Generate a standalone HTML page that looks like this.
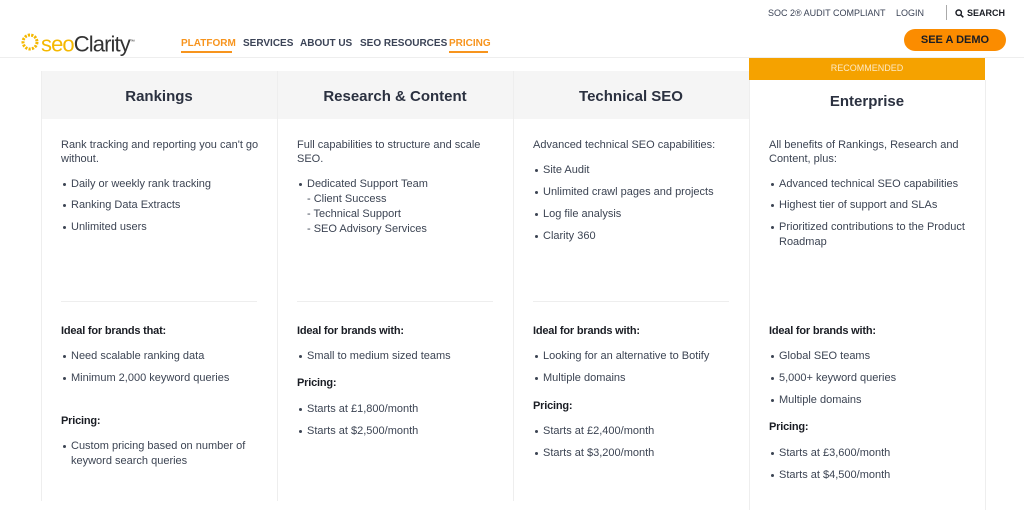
<!DOCTYPE html>
<html><head><meta charset="utf-8"><style>
*{margin:0;padding:0;box-sizing:border-box}
body{width:1024px;height:490px;overflow:hidden;background:#fff;font-family:"Liberation Sans",sans-serif;position:relative;color:#3c4453}
.a{position:absolute;white-space:nowrap}
.t{font-size:11px;line-height:14px;color:#3c4453}
.b{font-size:11px;line-height:14px;color:#1a1d24;font-weight:bold;letter-spacing:-0.2px}
.li{padding-left:10px}
.li:before{content:"";position:absolute;left:2px;top:6px;width:3px;height:3px;border-radius:50%;background:#3c4453}
.h{font-size:15px;font-weight:bold;color:#2b3140;text-align:center;width:236px;line-height:20px}
.nav{font-size:10px;font-weight:bold;color:#3b4356;top:38px}
.col{position:absolute;top:71px;height:430px;width:236px;border-left:1px solid #eee}
.hr{position:absolute;height:1px;background:#eee;width:196px;top:301px}
</style></head><body>
<div class="a" style="left:0;top:57px;width:1024px;height:1px;background:#eee"></div>
<div class="a" style="left:768px;top:8px;font-size:9px;color:#3b4356">SOC 2® AUDIT COMPLIANT</div>
<div class="a" style="left:896px;top:8px;font-size:9px;color:#3b4356">LOGIN</div>
<div class="a" style="left:946px;top:5px;width:1px;height:15px;background:#aaa"></div>
<svg class="a" style="left:955px;top:9px" width="9" height="9" viewBox="0 0 9 9"><circle cx="3.7" cy="3.7" r="2.7" fill="none" stroke="#1a1d24" stroke-width="1.4"/><path d="M5.8 5.8L8.3 8.3" stroke="#1a1d24" stroke-width="1.5"/></svg>
<div class="a" style="left:967px;top:8px;font-size:9px;font-weight:bold;color:#1a1d24">SEARCH</div>
<svg class="a" style="left:20px;top:32px" width="20" height="20" viewBox="0 0 20 20"><circle cx="10" cy="10" r="7" fill="none" stroke="#f5b800" stroke-width="3" stroke-dasharray="2.2 1.2"/></svg>
<div class="a" style="left:41px;top:28px;font-size:22px;letter-spacing:-0.9px;line-height:28px"><span style="color:#f5b800">seo</span><span style="color:#333">Clarity</span><sup style="font-size:5px;color:#333">™</sup></div>
<div class="a nav" style="left:181px;color:#f7941d">PLATFORM</div>
<div class="a" style="left:181px;top:51px;width:51px;height:2px;background:#f7941d"></div>
<div class="a nav" style="left:243px">SERVICES</div>
<div class="a nav" style="left:300px">ABOUT US</div>
<div class="a nav" style="left:360px">SEO RESOURCES</div>
<div class="a nav" style="left:449px;color:#f7941d">PRICING</div>
<div class="a" style="left:449px;top:51px;width:39px;height:2px;background:#f7941d"></div>
<div class="a" style="left:904px;top:29px;width:102px;height:22px;border-radius:11px;background:#fb8c00;color:#1a1d24;font-weight:bold;font-size:11px;text-align:center;line-height:22px">SEE A DEMO</div>
<div class="a" style="left:41px;top:71px;width:708px;height:48px;background:#f5f5f5"></div>
<div class="col" style="left:41px"></div>
<div class="col" style="left:277px"></div>
<div class="col" style="left:513px"></div>
<div class="col" style="left:749px;width:237px;border-right:1px solid #eee;top:80px"></div>
<div class="a" style="left:749px;top:58px;width:236px;height:22px;background:#f5a200;color:#fde9c4;font-size:9px;text-align:center;line-height:20px">RECOMMENDED</div>
<div class="a h" style="left:41px;top:87px">Rankings</div>
<div class="a h" style="left:277px;top:87px">Research &amp; Content</div>
<div class="a h" style="left:513px;top:87px">Technical SEO</div>
<div class="a h" style="left:749px;top:92px">Enterprise</div>
<div class="hr" style="left:61px"></div><div class="hr" style="left:297px"></div><div class="hr" style="left:533px"></div>
<div class="a t" style="left:61px;top:138px">Rank tracking and reporting you can't go<br>without.</div>
<div class="a t li" style="left:61px;top:177px">Daily or weekly rank tracking</div>
<div class="a t li" style="left:61px;top:198px">Ranking Data Extracts</div>
<div class="a t li" style="left:61px;top:220px">Unlimited users</div>
<div class="a b" style="left:61px;top:324px">Ideal for brands that:</div>
<div class="a t li" style="left:61px;top:349px">Need scalable ranking data</div>
<div class="a t li" style="left:61px;top:371px">Minimum 2,000 keyword queries</div>
<div class="a b" style="left:61px;top:414px">Pricing:</div>
<div class="a t li" style="left:61px;top:439px;line-height:15px">Custom pricing based on number of<br>keyword search queries</div>
<div class="a t" style="left:297px;top:138px">Full capabilities to structure and scale<br>SEO.</div>
<div class="a t li" style="left:297px;top:177px;line-height:15px">Dedicated Support Team<br>- Client Success<br>- Technical Support<br>- SEO Advisory Services</div>
<div class="a b" style="left:297px;top:324px">Ideal for brands with:</div>
<div class="a t li" style="left:297px;top:349px">Small to medium sized teams</div>
<div class="a b" style="left:297px;top:376px">Pricing:</div>
<div class="a t li" style="left:297px;top:402px">Starts at £1,800/month</div>
<div class="a t li" style="left:297px;top:424px">Starts at $2,500/month</div>
<div class="a t" style="left:533px;top:138px">Advanced technical SEO capabilities:</div>
<div class="a t li" style="left:533px;top:163px">Site Audit</div>
<div class="a t li" style="left:533px;top:185px">Unlimited crawl pages and projects</div>
<div class="a t li" style="left:533px;top:207px">Log file analysis</div>
<div class="a t li" style="left:533px;top:229px">Clarity 360</div>
<div class="a b" style="left:533px;top:324px">Ideal for brands with:</div>
<div class="a t li" style="left:533px;top:349px">Looking for an alternative to Botify</div>
<div class="a t li" style="left:533px;top:371px">Multiple domains</div>
<div class="a b" style="left:533px;top:399px">Pricing:</div>
<div class="a t li" style="left:533px;top:424px">Starts at £2,400/month</div>
<div class="a t li" style="left:533px;top:446px">Starts at $3,200/month</div>
<div class="a t" style="left:769px;top:138px">All benefits of Rankings, Research and<br>Content, plus:</div>
<div class="a t li" style="left:769px;top:177px">Advanced technical SEO capabilities</div>
<div class="a t li" style="left:769px;top:198px">Highest tier of support and SLAs</div>
<div class="a t li" style="left:769px;top:220px;line-height:15px">Prioritized contributions to the Product<br>Roadmap</div>
<div class="a b" style="left:769px;top:324px">Ideal for brands with:</div>
<div class="a t li" style="left:769px;top:349px">Global SEO teams</div>
<div class="a t li" style="left:769px;top:371px">5,000+ keyword queries</div>
<div class="a t li" style="left:769px;top:393px">Multiple domains</div>
<div class="a b" style="left:769px;top:420px">Pricing:</div>
<div class="a t li" style="left:769px;top:446px">Starts at £3,600/month</div>
<div class="a t li" style="left:769px;top:468px">Starts at $4,500/month</div>
</body></html>
